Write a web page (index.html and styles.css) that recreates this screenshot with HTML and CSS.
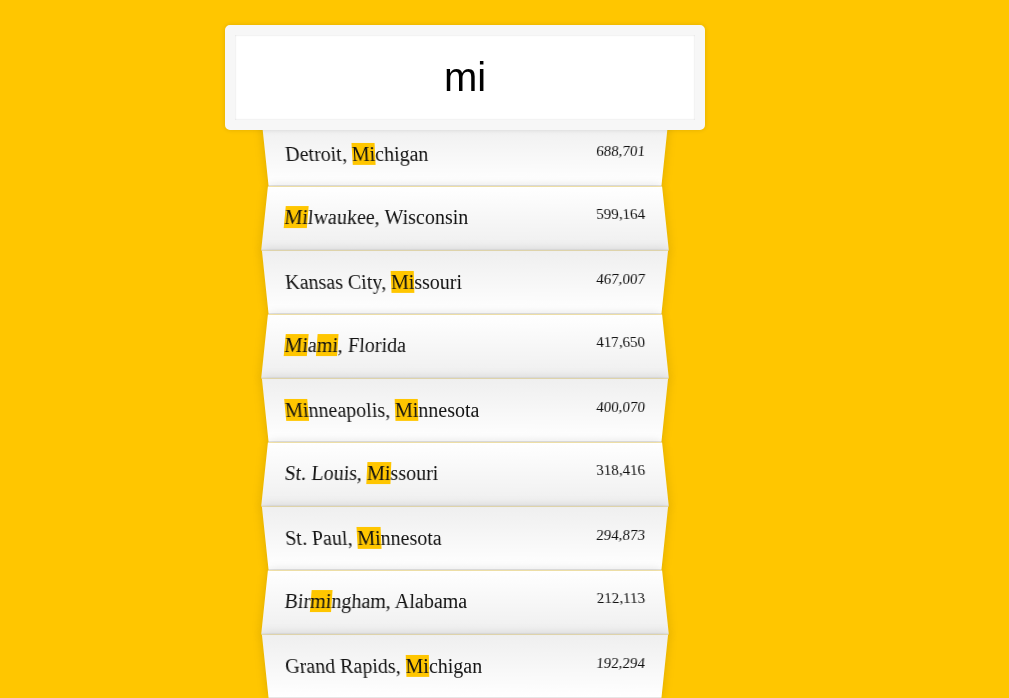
FILE: index.html
```html
<!DOCTYPE html>
<html lang="en">
<head>
<meta charset="utf-8">
<title>Type Ahead</title>
<link rel="stylesheet" href="styles.css">
</head>
<body>
<form class="search-form">
  <div class="search">mi</div>
  <ul class="suggestions">
    <li><span class="name">Detroit, <span class="hl">Mi</span>chigan</span><span class="population">688,701</span></li>
    <li><span class="name"><span class="hl">Mi</span>lwaukee, Wisconsin</span><span class="population">599,164</span></li>
    <li><span class="name">Kansas City, <span class="hl">Mi</span>ssouri</span><span class="population">467,007</span></li>
    <li><span class="name"><span class="hl">Mi</span>a<span class="hl">mi</span>, Florida</span><span class="population">417,650</span></li>
    <li><span class="name"><span class="hl">Mi</span>nneapolis, <span class="hl">Mi</span>nnesota</span><span class="population">400,070</span></li>
    <li><span class="name">St. Louis, <span class="hl">Mi</span>ssouri</span><span class="population">318,416</span></li>
    <li><span class="name">St. Paul, <span class="hl">Mi</span>nnesota</span><span class="population">294,873</span></li>
    <li><span class="name">Bir<span class="hl">mi</span>ngham, Alabama</span><span class="population">212,113</span></li>
    <li><span class="name">Grand Rapids, <span class="hl">Mi</span>chigan</span><span class="population">192,294</span></li>
  </ul>
</form>
</body>
</html>
```

FILE: styles.css
```css
html {
  box-sizing: border-box;
  background: #ffc600;
  font-family: "Liberation Serif", "Times New Roman", serif;
  font-size: 20px;
  font-weight: 200;
  overflow: hidden;
  height: 100%;
}

*, *::before, *::after {
  box-sizing: inherit;
}

body {
  margin: 0;
  height: 100%;
  overflow: hidden;
}

.search-form {
  width: 400px;
  margin: 15px 0 0 265px;
}

.search {
  position: relative;
  top: 10px;
  z-index: 2;
  width: 120%;
  margin: 0 0 0 -10%;
  padding: 20px;
  border: 10px solid #f7f7f7;
  border-radius: 5px;
  background: #fff;
  text-align: center;
  font-family: "Liberation Sans", Arial, sans-serif;
  font-size: 40px;
  font-weight: 400;
  line-height: 45px;
  color: #000;
  box-shadow: 0 0 5px rgba(0, 0, 0, 0.12), inset 0 0 2px rgba(0, 0, 0, 0.19);
}

.suggestions {
  margin: 0;
  padding: 0;
  position: relative;
}

.suggestions li {
  background: #fff;
  list-style: none;
  border-bottom: 1px solid #d8d8d8;
  box-shadow: 0 0 10px rgba(0, 0, 0, 0.14);
  margin: 0;
  padding: 20px;
  display: flex;
  justify-content: space-between;
  text-transform: capitalize;
  color: #111;
}

.suggestions li:nth-child(even) {
  transform: perspective(100px) rotateX(3deg) translateY(2px) scale(1.001);
  background: linear-gradient(to bottom, #ffffff 0%, #efefef 100%);
}

.suggestions li:nth-child(odd) {
  transform: perspective(100px) rotateX(-3deg) translateY(3px);
  background: linear-gradient(to top, #ffffff 0%, #efefef 100%);
}

.population {
  font-size: 15px;
}

.hl {
  background: #ffc600;
}
```
